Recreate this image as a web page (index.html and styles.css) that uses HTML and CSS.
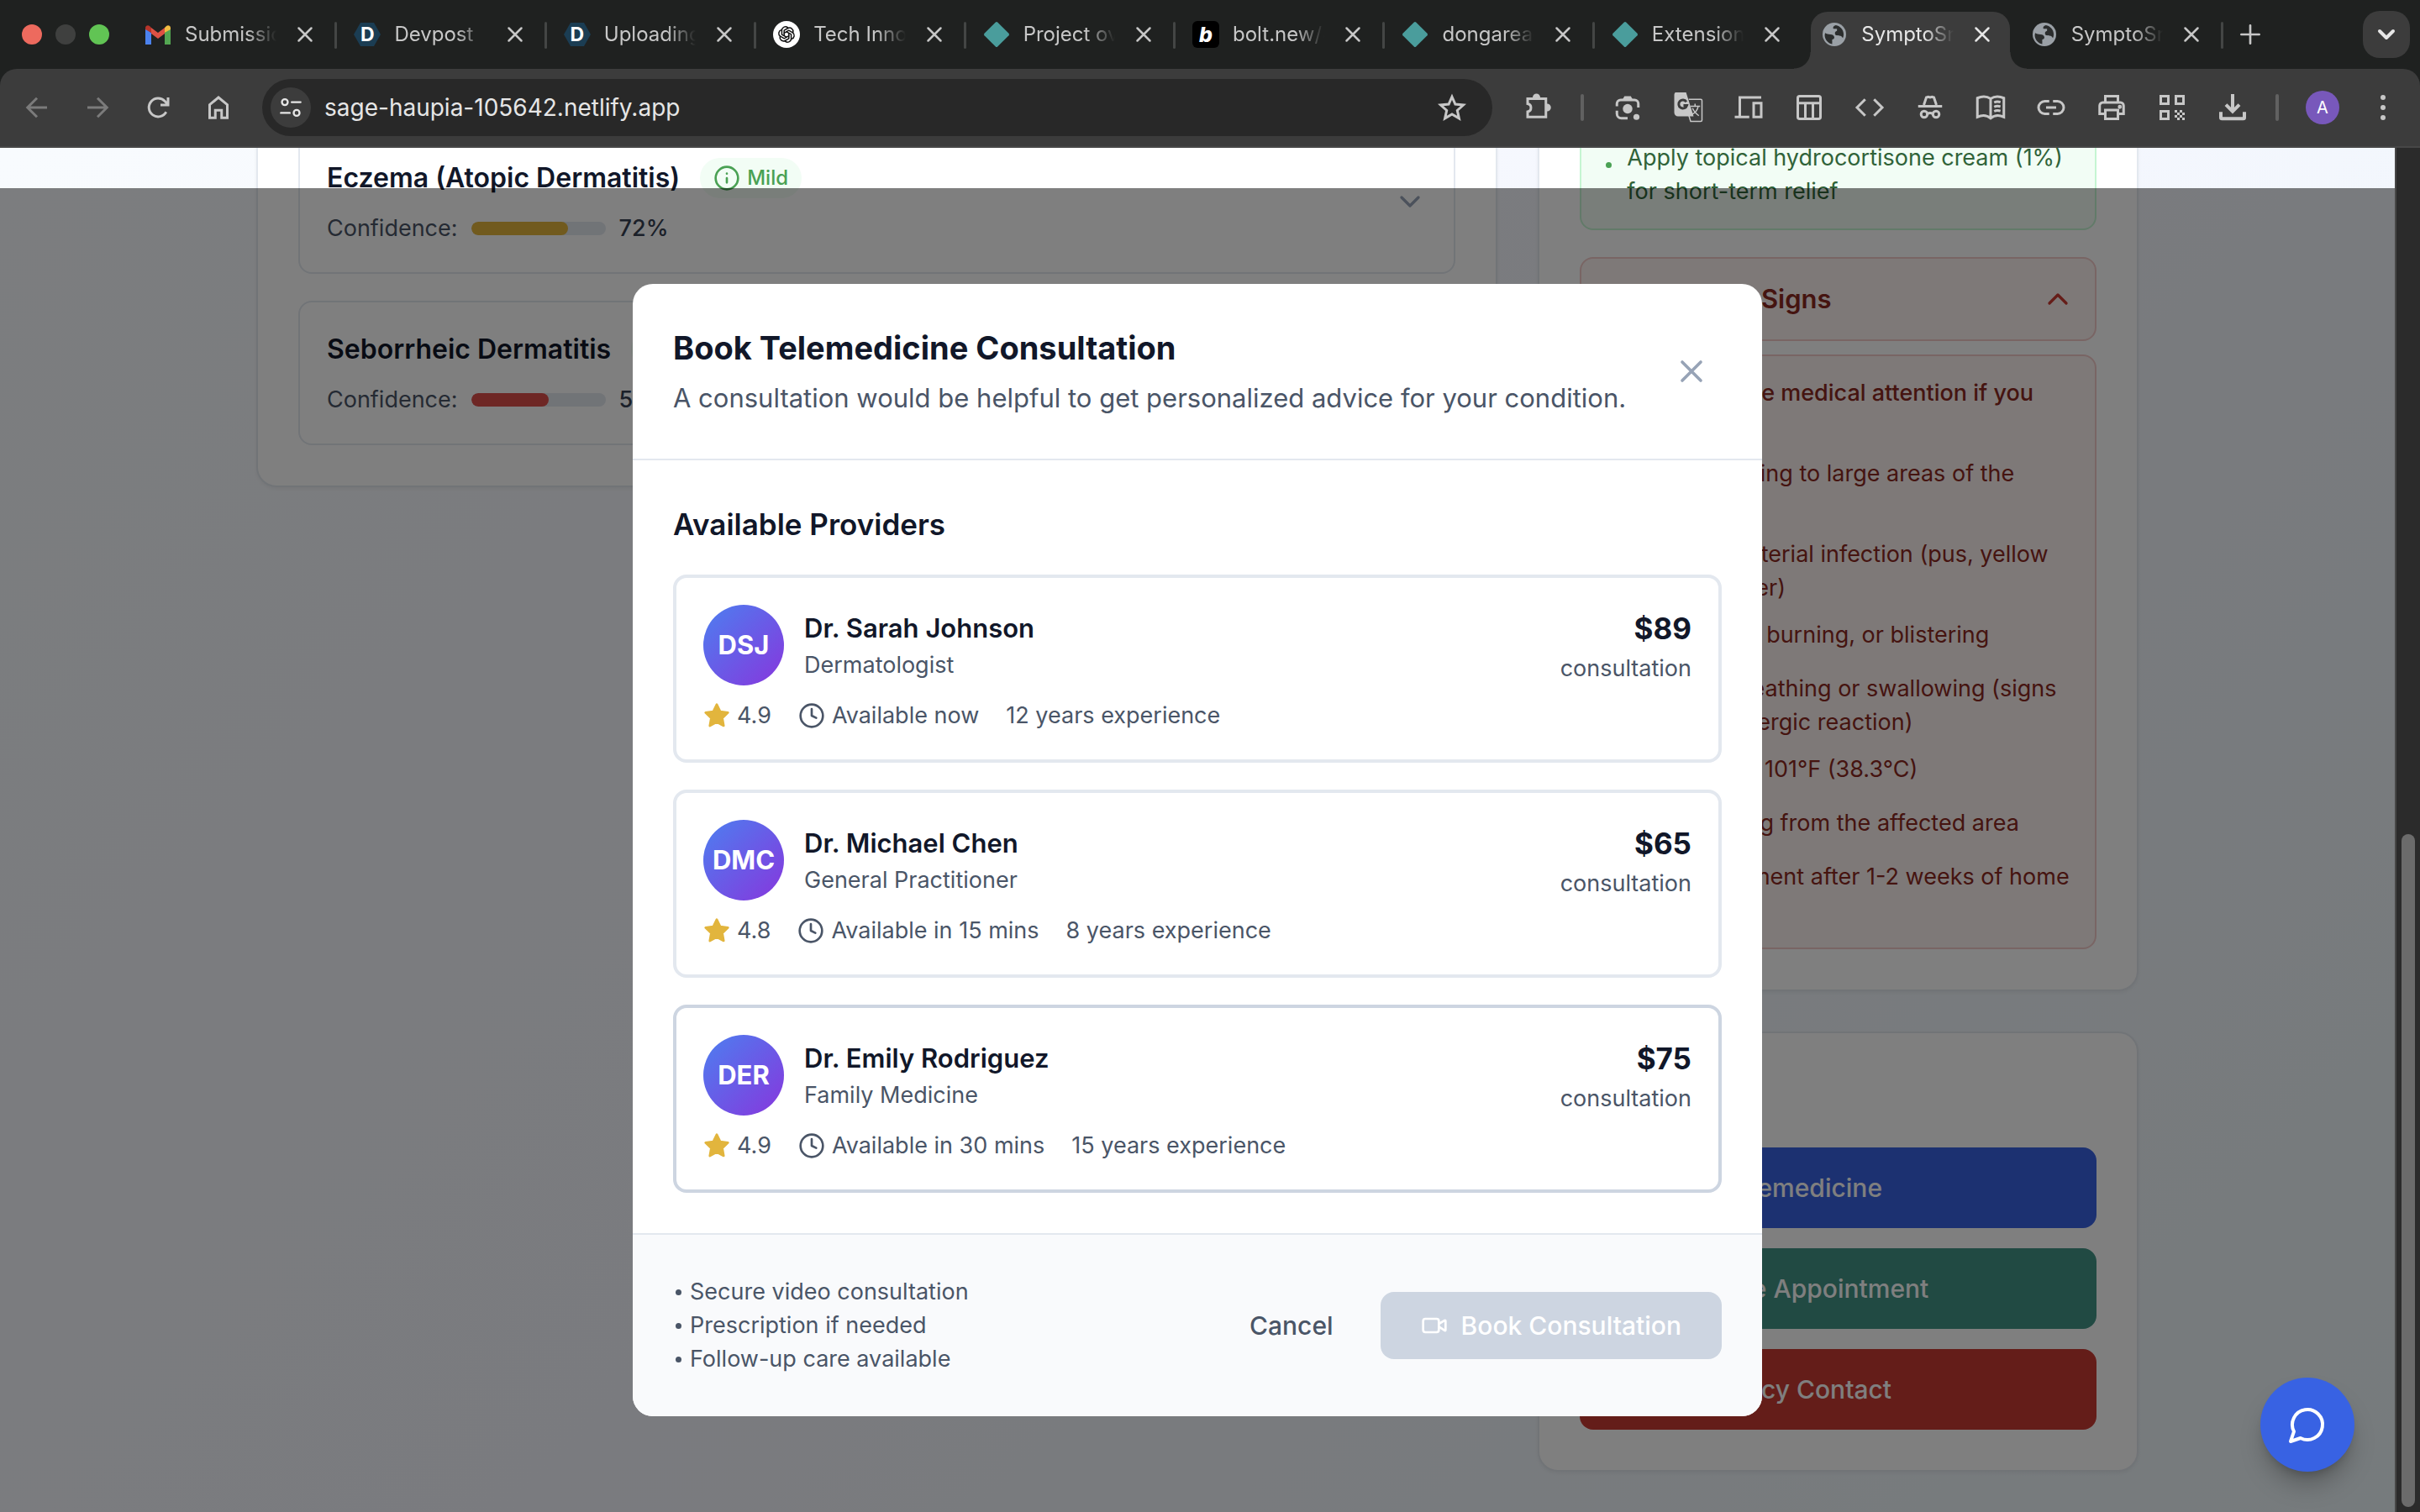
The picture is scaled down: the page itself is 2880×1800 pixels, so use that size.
FILE: index.html
```html
<!DOCTYPE html>
<html lang="en">
<head>
  <meta charset="UTF-8">
  <meta name="viewport" content="width=device-width, initial-scale=1.0">
  <title>SymptoSmart</title>
  <link rel="stylesheet" href="styles.css">
</head>
<body>
  <!-- icon sprite -->
  <svg width="0" height="0" hidden>
    <symbol id="i-x" viewBox="0 0 24 24"><path d="M18 6 6 18M6 6l12 12"/></symbol>
    <symbol id="i-globe" viewBox="0 0 24 24"><circle cx="12" cy="12" r="12" fill="#9aa0a6"/><path fill="#2b2d2d" d="M2.600 10.500c1.500 1.200 3.400 1.400 5.400 1.400 2.400 0 4 1.300 4 3.200 0 1.200-.9 1.900-2.200 2.100v4.600C5.500 21 2.200 17.300 2.200 12.600zM13.500 2.600c4.500.8 8 4.700 8 9.400 0 1.300-.3 2.600-.8 3.700-.9-1-1.300-2.300-2.900-2.500-2.300-.3-4.300.3-5-1.500-.7-2 .6-3 1.900-3.300V6.200h-3.300c-1 0-1.100-2.700 2.100-3.600z"/></symbol>
    <symbol id="i-diamond" viewBox="0 0 32 32"><path fill="#4a9d9c" d="M14.800 1.500a1.700 1.700 0 0 1 2.400 0l13.300 13.300a1.700 1.700 0 0 1 0 2.400L17.200 30.500a1.700 1.700 0 0 1-2.400 0L1.500 17.200a1.700 1.700 0 0 1 0-2.400z"/></symbol>
    <symbol id="i-hex" viewBox="0 0 32 32"><path fill="#1b3d53" d="M8 2h16l8 14-8 14H8L0 16z"/></symbol>
    <symbol id="i-star" viewBox="0 0 24 24"><path d="m12 2 3.090 6.260L22 9.270l-5 4.870 1.180 6.880L12 17.770l-6.180 3.250L7 14.140 2 9.270l6.910-1.010z"/></symbol>
    <symbol id="i-clock" viewBox="0 0 24 24"><circle cx="12" cy="12" r="10"/><path d="M12 6v6l4 2"/></symbol>
    <symbol id="i-info" viewBox="0 0 24 24"><circle cx="12" cy="12" r="10"/><path d="M12 16v-4M12 8h.01"/></symbol>
    <symbol id="i-down" viewBox="0 0 24 24"><path d="m6 9 6 6 6-6"/></symbol>
    <symbol id="i-up" viewBox="0 0 24 24"><path d="m18 15-6-6-6 6"/></symbol>
    <symbol id="i-alert" viewBox="0 0 24 24"><path d="m21.730 18-8-14a2 2 0 0 0-3.480 0l-8 14A2 2 0 0 0 4 21h16a2 2 0 0 0 1.730-3M12 9v4M12 17h.01"/></symbol>
    <symbol id="i-video" viewBox="0 0 24 24"><path d="m16 13 5.223 3.482a.5.5 0 0 0 .777-.416V7.870a.5.5 0 0 0-.752-.432L16 10.500"/><rect x="2" y="6" width="14" height="12" rx="2"/></symbol>
    <symbol id="i-calendar" viewBox="0 0 24 24"><path d="M8 2v4M16 2v4M3 10h18"/><rect x="3" y="4" width="18" height="18" rx="2"/></symbol>
    <symbol id="i-phone" viewBox="0 0 24 24"><path d="M22 16.920v3a2 2 0 0 1-2.180 2 19.800 19.800 0 0 1-8.630-3.070 19.500 19.500 0 0 1-6-6A19.800 19.800 0 0 1 2.120 4.180 2 2 0 0 1 4.110 2h3a2 2 0 0 1 2 1.720c.13.960.36 1.900.7 2.810a2 2 0 0 1-.45 2.110L8.090 9.910a16 16 0 0 0 6 6l1.270-1.270a2 2 0 0 1 2.110-.45c.91.340 1.850.570 2.810.7A2 2 0 0 1 22 16.920z"/></symbol>
    <symbol id="i-chat" viewBox="0 0 24 24"><path d="M7.900 20A9 9 0 1 0 4 16.100L2 22Z"/></symbol>
  </svg>

  <header class="browser">
    <div class="tabstrip">
      <div class="lights"><span class="light red"></span><span class="light"></span><span class="light green"></span></div>
      <div class="tabs">
        <div class="tab">
          <svg class="favicon" viewBox="0 0 32 32"><path fill="#4b82ee" d="M1 28V9l7 5v14z"/><path fill="#53a752" d="M31 28V9l-7 5v14z"/><path fill="#f2bd42" d="M24 14V8l2-2c2-1.500 5-.5 5 2.500V10z"/><path fill="#b7352a" d="M8 14V8L6 6C4 4.500 1 5.500 1 8.500V10z"/><path fill="#dd5144" d="M8 8l8 6 8-6v7l-8 6-8-6z"/></svg>
          <span class="tab-title">Submissions</span>
          <button class="tab-close" aria-label="Close tab"><svg><use href="#i-x"/></svg></button>
        </div>
        <div class="tab">
          <span class="favicon devpost"><svg><use href="#i-hex"/></svg><b>D</b></span>
          <span class="tab-title">Devpost</span>
          <button class="tab-close" aria-label="Close tab"><svg><use href="#i-x"/></svg></button>
        </div>
        <div class="tab">
          <span class="favicon devpost"><svg><use href="#i-hex"/></svg><b>D</b></span>
          <span class="tab-title">Uploading a</span>
          <button class="tab-close" aria-label="Close tab"><svg><use href="#i-x"/></svg></button>
        </div>
        <div class="tab">
          <svg class="favicon" viewBox="0 0 32 32"><circle cx="16" cy="16" r="16" fill="#fff"/><g fill="none" stroke="#111" stroke-width="1.500"><path id="petal" d="M13.200 17.600v-6.400l4.600-2.700a4.300 4.300 0 0 1 6 4.800"/><use href="#petal" transform="rotate(60 16 16)"/><use href="#petal" transform="rotate(120 16 16)"/><use href="#petal" transform="rotate(180 16 16)"/><use href="#petal" transform="rotate(240 16 16)"/><use href="#petal" transform="rotate(300 16 16)"/></g></svg>
          <span class="tab-title">Tech Innovation</span>
          <button class="tab-close" aria-label="Close tab"><svg><use href="#i-x"/></svg></button>
        </div>
        <div class="tab">
          <svg class="favicon"><use href="#i-diamond"/></svg>
          <span class="tab-title">Project overview</span>
          <button class="tab-close" aria-label="Close tab"><svg><use href="#i-x"/></svg></button>
        </div>
        <div class="tab">
          <span class="favicon bolt"><b>b</b></span>
          <span class="tab-title">bolt.new/~/sb1</span>
          <button class="tab-close" aria-label="Close tab"><svg><use href="#i-x"/></svg></button>
        </div>
        <div class="tab">
          <svg class="favicon"><use href="#i-diamond"/></svg>
          <span class="tab-title">dongareaditya</span>
          <button class="tab-close" aria-label="Close tab"><svg><use href="#i-x"/></svg></button>
        </div>
        <div class="tab before-active">
          <svg class="favicon"><use href="#i-diamond"/></svg>
          <span class="tab-title">Extensions</span>
          <button class="tab-close" aria-label="Close tab"><svg><use href="#i-x"/></svg></button>
        </div>
        <div class="tab active">
          <svg class="favicon globe"><use href="#i-globe"/></svg>
          <span class="tab-title">SymptoSmart</span>
          <button class="tab-close" aria-label="Close tab"><svg><use href="#i-x"/></svg></button>
        </div>
        <div class="tab">
          <svg class="favicon globe"><use href="#i-globe"/></svg>
          <span class="tab-title">SymptoSmart</span>
          <button class="tab-close" aria-label="Close tab"><svg><use href="#i-x"/></svg></button>
        </div>
      </div>
      <button class="new-tab" aria-label="New tab"><svg viewBox="0 0 24 24"><path d="M12 4v16M4 12h16"/></svg></button>
      <button class="tab-search" aria-label="Search tabs"><svg><use href="#i-down"/></svg></button>
    </div>

    <div class="toolbar">
      <button class="tool off" aria-label="Back"><svg viewBox="0 0 24 24"><path d="M20 12H5M12 4.500 4.500 12l7.500 7.500"/></svg></button>
      <button class="tool off" aria-label="Forward"><svg viewBox="0 0 24 24"><path d="M4 12h15M12 4.500l7.500 7.500-7.500 7.500"/></svg></button>
      <button class="tool" aria-label="Reload"><svg viewBox="0 0 24 24"><path d="M18.500 15.500A7.300 7.300 0 1 1 17.500 7l1.800 2M20 4v6h-6"/></svg></button>
      <button class="tool" aria-label="Home"><svg viewBox="0 0 24 24"><path d="M5 20.200V9.800l7-5.800 7 5.800v10.400h-4.500v-6h-5v6z"/></svg></button>
      <div class="omnibox">
        <button class="site-info" aria-label="View site information"><svg viewBox="0 0 24 24"><circle cx="6" cy="6.500" r="3"/><path d="M13 6.500h9M2 17.500h9"/><circle cx="18" cy="17.500" r="3"/></svg></button>
        <input class="url" type="text" aria-label="Address" value="sage-haupia-105642.netlify.app">
        <button class="bookmark" aria-label="Bookmark this tab"><svg viewBox="0 0 24 24"><path d="m12 3.500 2.600 5.900 6.400.600-4.800 4.300 1.400 6.300-5.600-3.300-5.600 3.300 1.400-6.300L3 10l6.400-.6z"/></svg></button>
      </div>
      <button class="tool" aria-label="Extensions"><svg viewBox="0 0 24 24"><path d="M4 5h14.500v14.500H4v-4.200a3.200 3.200 0 0 0 0-6.300z"/><path class="solid" d="M9 4a2 2 0 0 1 4 0zM19.500 10a2 2 0 0 1 0 4z"/></svg></button>
      <span class="bar"></span>
      <button class="tool" aria-label="Search with Lens"><svg viewBox="0 0 24 24"><path d="M3.500 11V9a3 3 0 0 1 3-3h11a3 3 0 0 1 3 3v3M3.500 14.500v2.500a3.500 3.500 0 0 0 3.500 3.500h5"/><path class="solid flat" d="M8 5.500 9.500 3h5L16 5.500z"/><circle class="solid flat" cx="12" cy="13" r="3.800"/><circle class="solid flat" cx="19" cy="19.500" r="2.400"/></svg></button>
      <button class="tool" aria-label="Translate"><svg viewBox="0 0 24 24"><path class="solid" d="M3 .500h6.500L15 18H4a2 2 0 0 1-2-2V2a1.500 1.500 0 0 1 1-1.500z"/><path class="cut" d="M10.600 7.500A3.300 3.300 0 1 0 11 10.300H8.300"/><path class="thin" d="M12.500 5.500H22a1 1 0 0 1 1 1V22a1 1 0 0 1-1 1H14l-1.500-5M14 11h7.500M17.500 9v2M20 11c-.5 3-3 5.500-5 6.500M15.500 12.500c1 2.500 3 4.500 5 6"/></svg></button>
      <button class="tool" aria-label="Send to devices"><svg viewBox="0 0 24 24"><path d="M22 4H5v15"/><path d="M1 19.500h11.500M16 8.500h6v11h-6z"/></svg></button>
      <button class="tool" aria-label="Reading mode"><svg viewBox="0 0 24 24"><rect x="3" y="3" width="18" height="18" rx="1.500"/><path d="M3 8.500h18M9 8.500V21M15 8.500V21"/></svg></button>
      <button class="tool" aria-label="Developer tools"><svg viewBox="0 0 24 24"><path d="m8.500 5.500-6.500 6.500 6.500 6.500M15.500 5.500 22 12l-6.500 6.500"/></svg></button>
      <button class="tool" aria-label="Incognito"><svg viewBox="0 0 24 24"><path d="M2.500 11h19M7 10l2-6 1.500-.5 1.500.5 1.500-.5L15 4l2 6M10 17c1-.8 3-.8 4 0"/><circle cx="7.300" cy="17.300" r="2.500"/><circle cx="16.700" cy="17.300" r="2.500"/></svg></button>
      <button class="tool" aria-label="Reading list"><svg viewBox="0 0 24 24"><path d="M12 5C9 3 5 3 1.500 4.500v15C5 18 9 18 12 20.500c3-2.500 7-2.500 10.500-1v-15C19 3 15 3 12 5zM12 5v15"/><path d="M14.800 8c1.500-.7 3.500-.7 5-.2M14.800 11.500c1.500-.7 3.500-.7 5-.2M14.800 15c1.500-.7 3.500-.7 5-.2"/></svg></button>
      <button class="tool" aria-label="Copy link"><svg viewBox="0 0 24 24"><path d="M10.500 7H7a5 5 0 0 0 0 10h3.500M13.500 7H17a5 5 0 0 1 0 10h-3.500M8 12h8"/></svg></button>
      <button class="tool" aria-label="Print"><svg viewBox="0 0 24 24"><path d="M7 8V3h10v5M7 17H2.500v-6.500A2.500 2.500 0 0 1 5 8h14a2.500 2.500 0 0 1 2.500 2.500V17H17M7 14h10v7H7z"/><circle class="solid" cx="18.500" cy="11.500" r=".6"/></svg></button>
      <button class="tool" aria-label="Create QR code"><svg viewBox="0 0 24 24"><path d="M3 3h6v6H3zM15 3h6v6h-6zM3 15h6v6H3z"/><path class="solid flat" d="M14 14h2v2h-2zM18 14h2v2h-2zM16 16h2v2h-2zM20 16h2v2h-2zM14 18h2v2h-2zM18 18h2v2h-2zM16 20h2v2h-2zM20 20h2v2h-2z"/></svg></button>
      <button class="tool" aria-label="Downloads"><svg class="heavy" viewBox="0 0 24 24"><path d="M12 0v15M6 9.500l6 6 6-6M1.500 16v5a1 1 0 0 0 1 1h19a1 1 0 0 0 1-1v-5"/></svg></button>
      <span class="bar"></span>
      <button class="tool" aria-label="Profile"><span class="profile">A</span></button>
      <button class="tool" aria-label="Menu"><svg viewBox="0 0 24 24"><circle class="solid flat" cx="12" cy="4" r="2"/><circle class="solid flat" cx="12" cy="12" r="2"/><circle class="solid flat" cx="12" cy="20" r="2"/></svg></button>
    </div>
  </header>

  <div class="viewport">
    <div class="page">
      <main class="results">
        <section class="card conditions">
          <h2 class="card-title short">Possible Conditions</h2>
          <div class="condition">
            <div class="condition-body">
              <div class="condition-head"><h3>Eczema (Atopic Dermatitis)</h3><span class="badge"><svg><use href="#i-info"/></svg>Mild</span></div>
              <div class="confidence">Confidence:<span class="track"><span class="fill mid" style="width:72%"></span></span><strong>72%</strong></div>
            </div>
            <svg class="chevron"><use href="#i-down"/></svg>
          </div>
          <div class="condition">
            <div class="condition-body">
              <div class="condition-head"><h3>Seborrheic Dermatitis</h3><span class="badge"><svg><use href="#i-info"/></svg>Mild</span></div>
              <div class="confidence">Confidence:<span class="track"><span class="fill low" style="width:58%"></span></span><strong>58%</strong></div>
            </div>
            <svg class="chevron"><use href="#i-down"/></svg>
          </div>
        </section>

        <aside class="side">
          <section class="card">
            <ul class="notes good">
              <li>Keep the area moisturized</li>
              <li>Apply topical hydrocortisone cream (1%) for short-term relief</li>
            </ul>
            <button class="warn-toggle"><svg><use href="#i-alert"/></svg><span>Warning Signs</span><svg class="end"><use href="#i-up"/></svg></button>
            <div class="notes bad">
              <p>Seek immediate medical attention if you experience:</p>
              <ul>
                <li>Rash spreading to large areas of the body</li>
                <li>Signs of bacterial infection (pus, yellow crust, or fever)</li>
                <li>Severe pain, burning, or blistering</li>
                <li>Difficulty breathing or swallowing (signs of severe allergic reaction)</li>
                <li>Fever above 101°F (38.3°C)</li>
                <li>Red streaking from the affected area</li>
                <li>No improvement after 1-2 weeks of home care</li>
              </ul>
            </div>
          </section>

          <section class="card">
            <h2 class="card-title">Take Action</h2>
            <div class="actions">
              <button class="action blue"><svg><use href="#i-video"/></svg>Book Telemedicine</button>
              <button class="action teal"><svg><use href="#i-calendar"/></svg>Schedule Appointment</button>
              <button class="action crimson"><svg><use href="#i-phone"/></svg>Emergency Contact</button>
            </div>
          </section>
        </aside>
      </main>

      <div class="overlay">
        <div class="modal" role="dialog" aria-labelledby="modalTitle">
          <div class="modal-head">
            <div>
              <h2 id="modalTitle">Book Telemedicine Consultation</h2>
              <p>A consultation would be helpful to get personalized advice for your condition.</p>
            </div>
            <button class="modal-close" aria-label="Close"><svg><use href="#i-x"/></svg></button>
          </div>

          <div class="modal-body">
            <h3>Available Providers</h3>
            <div class="providers">
              <button class="provider">
                <span class="who">
                  <span class="person"><span class="avatar">DSJ</span><span><span class="name">Dr. Sarah Johnson</span><span class="role">Dermatologist</span></span></span>
                  <span class="meta"><span><svg class="star"><use href="#i-star"/></svg>4.9</span><span><svg><use href="#i-clock"/></svg>Available now</span><span>12 years experience</span></span>
                </span>
                <span class="fee"><span class="price">$89</span><span class="role">consultation</span></span>
              </button>
              <button class="provider">
                <span class="who">
                  <span class="person"><span class="avatar">DMC</span><span><span class="name">Dr. Michael Chen</span><span class="role">General Practitioner</span></span></span>
                  <span class="meta"><span><svg class="star"><use href="#i-star"/></svg>4.8</span><span><svg><use href="#i-clock"/></svg>Available in 15 mins</span><span>8 years experience</span></span>
                </span>
                <span class="fee"><span class="price">$65</span><span class="role">consultation</span></span>
              </button>
              <button class="provider hovered">
                <span class="who">
                  <span class="person"><span class="avatar">DER</span><span><span class="name">Dr. Emily Rodriguez</span><span class="role">Family Medicine</span></span></span>
                  <span class="meta"><span><svg class="star"><use href="#i-star"/></svg>4.9</span><span><svg><use href="#i-clock"/></svg>Available in 30 mins</span><span>15 years experience</span></span>
                </span>
                <span class="fee"><span class="price">$75</span><span class="role">consultation</span></span>
              </button>
            </div>
          </div>

          <div class="modal-foot">
            <ul class="perks">
              <li>Secure video consultation</li>
              <li>Prescription if needed</li>
              <li>Follow-up care available</li>
            </ul>
            <div class="modal-actions">
              <button class="cancel">Cancel</button>
              <button class="book" disabled><svg><use href="#i-video"/></svg>Book Consultation</button>
            </div>
          </div>
        </div>
      </div>

      <button class="chat" aria-label="Open chat"><svg><use href="#i-chat"/></svg></button>
    </div>
    <div class="scrollbar"><span class="thumb"></span></div>
  </div>
</body>
</html>
```
FILE: styles.css
```css
:root{
  --ink:#111729;
  --muted:#4a5567;
  --line:#e3e8ef;
  --line-dark:#cdd5e1;
  --chrome:#3c3c3c;
  --strip:#1f2120;
  --icon:#c7c7c7;
}
*{box-sizing:border-box;margin:0;padding:0}
body{
  font-family:Inter,"Liberation Sans",sans-serif;
  font-size:31px;line-height:48px;color:var(--ink);
  height:100vh;display:flex;flex-direction:column;overflow:hidden;
}
button,input{font:inherit;color:inherit;border:none;background:none}
button{cursor:pointer}
ul{list-style:none}
svg{fill:none;stroke:currentColor;stroke-width:2;stroke-linecap:round;stroke-linejoin:round;flex:none;display:block}

/* browser frame */
.browser{background:var(--strip);flex:none}
.tabstrip{display:flex;align-items:center;height:82px;padding:0 12px 0 26px}
.lights{display:flex;gap:16px;width:126px;flex:none}
.light{width:24px;height:24px;border-radius:50%;background:#3f403f}
.light.red{background:#ed6a5e}
.light.green{background:#61c454}
.tabs{display:flex;flex:1;max-width:2494px}
.tab{position:relative;flex:1;min-width:0;height:82px;padding:0 22px 0 20px;display:flex;align-items:center;color:var(--icon);font-size:24px;line-height:32px}
.tab::after{content:"";position:absolute;right:0;top:26px;width:3px;height:32px;border-radius:2px;background:#444645}
.tab.before-active::after{display:none}
.favicon{width:32px;height:32px;stroke:none;flex:none}
.favicon.globe{padding:2px}
.favicon b{position:relative;display:block;text-align:center;color:#fff;font-size:23px;line-height:32px}
.devpost{position:relative}
.devpost svg{position:absolute;inset:0;width:32px;height:32px;stroke:none}
.bolt{background:#000;border-radius:6px}
.bolt b{font-style:italic;font-weight:800;font-size:25px}
.tab-title{flex:1;min-width:0;margin:0 18px 0 16px;overflow:hidden;white-space:nowrap;mask-image:linear-gradient(90deg,#000 68%,transparent)}
.tab-close{flex:none;width:32px;height:32px;display:grid;place-items:center}
.tab-close svg{width:30px;height:30px}
.active{color:#e6e6e6;z-index:1}
.active .favicon,.active .tab-title,.active .tab-close{position:relative;z-index:1}
.active::before{content:"";position:absolute;inset:14px 5px 0 8px;background:var(--chrome);border-radius:20px 20px 0 0}
/* flared feet of the active tab */
.active.tab::after{
  top:auto;left:-12px;right:-15px;bottom:0;width:auto;height:20px;border-radius:0;
  background:
    radial-gradient(circle at 0 0,transparent 19px,var(--chrome) 20px) left/20px 20px no-repeat,
    radial-gradient(circle at 100% 0,transparent 19px,var(--chrome) 20px) right/20px 20px no-repeat;
}
.new-tab{width:64px;height:56px;display:grid;place-items:center;color:var(--icon)}
.new-tab svg{width:32px;height:32px}
.tab-search{margin-left:auto;width:56px;height:56px;border-radius:20px;background:var(--chrome);display:grid;place-items:center;color:#e6e6e6}
.tab-search svg{width:32px;height:32px;stroke-width:3}
.toolbar{display:flex;align-items:center;height:94px;padding:0 8px;background:var(--chrome);border-bottom:2px solid #474747;border-radius:20px 20px 0 0}
.tool{width:72px;height:68px;display:grid;place-items:center;color:var(--icon);flex:none}
.tool.off{color:#7b7b7b}
.tool svg{width:36px;height:36px;stroke-linecap:butt;stroke-linejoin:miter}
.tool svg.heavy{width:32px;height:32px;stroke-width:3}
.solid{fill:currentColor}
.flat{stroke:none}
.cut{stroke:var(--chrome)}
.thin{stroke-width:1}
.bar{width:4px;height:32px;border-radius:2px;background:#616161;margin:0 16px 0 15px;flex:none}
.omnibox{flex:1;height:68px;border-radius:34px;background:#282828;display:flex;align-items:center;margin:0 18px 0 16px;padding:0 24px 0 10px}
.site-info{width:48px;height:48px;border-radius:50%;background:var(--chrome);display:grid;place-items:center;color:#e6e6e6}
.site-info svg{width:28px;height:28px}
.url{flex:1;min-width:0;padding:0 16px;font-size:28px;line-height:40px;color:#e6e6e6;outline:none}
.bookmark{width:48px;height:48px;display:grid;place-items:center;color:var(--icon)}
.bookmark svg{width:36px;height:36px;stroke-linejoin:miter}
.profile{width:40px;height:40px;border-radius:50%;background:#7858bb;color:#fff;font-size:20px;line-height:40px;text-align:center}

/* page */
.viewport{flex:1;min-height:0;display:flex}
.page{position:relative;flex:1;min-width:0;overflow:hidden;background:linear-gradient(135deg,#f8fbfe 0%,#f5f7fe 50%,#edf6fa 100%)}
.scrollbar{width:30px;flex:none;background:#2b2b2b;border-left:2px solid #474747;padding:817px 6px 6px;display:flex}
.thumb{flex:1;border-radius:8px;background:#6b6b6b}
.results{max-width:2304px;margin:-148px auto 0;padding:0 32px;display:grid;grid-template-columns:repeat(3,1fr);gap:48px;align-items:start}
.conditions{grid-column:span 2}
.card{background:#fff;border:2px solid var(--line);border-radius:24px;padding:48px;box-shadow:0 2px 4px rgba(0,0,0,.05)}
.card-title{font-size:35px;line-height:56px;font-weight:600;margin-bottom:32px}
.card-title.short{line-height:44px}
.condition{border:2px solid var(--line);border-radius:16px;padding:32px;display:flex;align-items:center;justify-content:space-between}
.condition + .condition{margin-top:32px}
.condition-head{display:flex;align-items:center;gap:24px;margin-bottom:16px}
.condition h3{font-size:32px;font-weight:600}
.badge{display:flex;align-items:center;gap:8px;padding:8px 16px;border-radius:24px;background:#f2fdf5;color:#4aa154;font-size:24px;line-height:32px;font-weight:500}
.badge svg{width:32px;height:32px}
.confidence{display:flex;align-items:center;gap:16px;font-size:27px;line-height:40px;color:var(--muted)}
.confidence strong{font-weight:500;color:#364153}
.track{width:160px;height:16px;border-radius:8px;background:var(--line);overflow:hidden}
.fill{display:block;height:16px;border-radius:8px}
.mid{background:#e2b53d}
.low{background:#dd4f4b}
.chevron{width:40px;height:40px;color:#97a3b6}
.side{display:flex;flex-direction:column;gap:48px}
.notes{border:2px solid;border-radius:16px;padding:24px;font-size:27px;line-height:40px}
.notes.good{background:#f2fdf5;border-color:#c5f5d2;color:#306339;margin-bottom:32px}
.notes.bad{background:#fcf2f1;border-color:#f3cbc9;color:#8b2821;margin-top:16px}
.notes p{font-weight:500;margin-bottom:16px}
.notes li{display:flex;gap:16px;min-height:48px}
.notes li + li{margin-top:16px}
.notes li::before{content:"";width:7px;height:7px;border-radius:50%;background:#4aa154;margin:25px 2px 0 5px;flex:none}
.notes.bad li::before{background:#d5463f}
.notes.bad li:last-child{min-height:80px}
.warn-toggle{width:100%;display:flex;align-items:center;gap:16px;padding:24px;border:2px solid #f3cbc9;border-radius:16px;background:#fcf2f1;color:#8b2821;font-weight:600}
.warn-toggle svg{width:40px;height:40px;color:#cb3a31}
.warn-toggle .end{margin-left:auto}
.actions{display:flex;flex-direction:column;gap:24px}
.action{display:flex;align-items:center;gap:16px;padding:24px 32px;border-radius:16px;color:#fff;font-size:30px;font-weight:500}
.action svg{width:40px;height:40px}
.blue{background:#3862e3}
.teal{background:#429486}
.crimson{background:#c83a33}

/* booking dialog */
.overlay{position:absolute;inset:48px 0 0;background:rgba(0,0,0,.5);display:flex;align-items:center;justify-content:center}
.modal{width:100%;max-width:1344px;background:#fff;border-radius:24px;overflow:hidden}
.modal-head{display:flex;align-items:center;justify-content:space-between;padding:48px;border-bottom:2px solid var(--line)}
.modal-head h2{font-size:38px;line-height:56px;font-weight:700;margin-bottom:8px}
.modal-head p{color:var(--muted)}
.modal-close{width:72px;height:72px;display:grid;place-items:center;color:#97a3b6}
.modal-close svg{width:48px;height:48px;padding:2px}
.modal-body{padding:48px}
.modal-body h3{font-size:35px;line-height:56px;font-weight:600;margin-bottom:32px}
.providers{display:flex;flex-direction:column;gap:32px}
.provider{display:flex;align-items:flex-start;justify-content:space-between;width:100%;padding:32px;border:4px solid var(--line);border-radius:16px;text-align:left}
.provider.hovered{border-color:var(--line-dark)}
.person{display:flex;align-items:center;gap:24px;margin-bottom:16px}
.avatar{width:96px;height:96px;border-radius:50%;background:linear-gradient(135deg,#4c7ff0,#8736dd);color:#fff;font-weight:700;line-height:96px;text-align:center}
.name,.role,.price{display:block}
.name{font-weight:600}
.role{font-size:27px;line-height:40px;color:var(--muted)}
.meta{display:flex;gap:32px;font-size:27px;line-height:40px;color:var(--muted)}
.meta span{display:flex;align-items:center;gap:8px}
.meta svg{width:32px;height:32px}
.meta .star{fill:#e2b53d;stroke:#e2b53d}
.fee{text-align:right}
.price{font-size:35px;line-height:56px;font-weight:700}
.modal-foot{display:flex;align-items:center;justify-content:space-between;padding:48px;background:#f9fafc;border-top:2px solid var(--line)}
.perks{font-size:27px;line-height:40px;color:var(--muted)}
.perks li{display:flex;align-items:center;gap:10px}
.perks li::before{content:"";width:7px;height:7px;border-radius:50%;background:currentColor;margin-left:3px}
.modal-actions{display:flex;gap:24px}
.modal-actions button{display:flex;align-items:center;gap:16px;padding:16px 32px;border-radius:16px;font-size:30px;font-weight:500;color:var(--muted)}
.modal-actions .book{padding:16px 48px;background:var(--line-dark);color:#fff}
.book svg{width:32px;height:32px}
.chat{position:absolute;right:48px;bottom:48px;width:112px;height:112px;border-radius:50%;background:#3862e3;color:#fff;display:grid;place-items:center;box-shadow:0 20px 30px -6px rgba(0,0,0,.25),0 8px 12px -6px rgba(0,0,0,.2)}
.chat svg{width:48px;height:48px}
```
